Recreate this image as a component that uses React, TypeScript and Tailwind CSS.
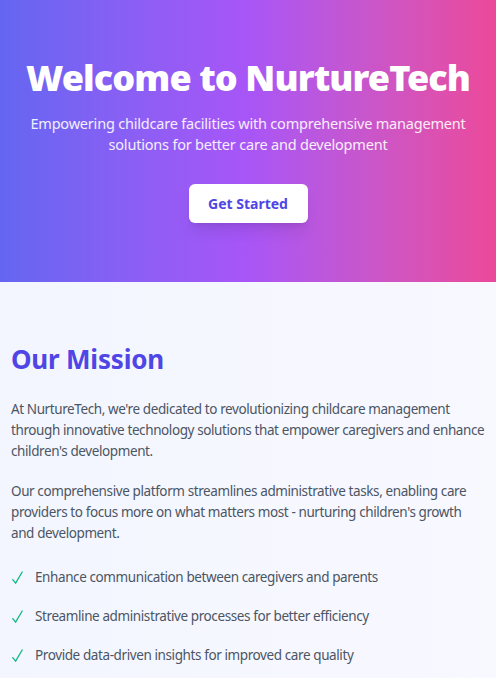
export default function App() {
  const points = [
    "Enhance communication between caregivers and parents",
    "Streamline administrative processes for better efficiency",
    "Provide data-driven insights for improved care quality",
  ];

  return (
    <main className="min-h-screen bg-gradient-to-r from-[#f3f6ff] to-[#f8f8ff] font-['Noto_Sans',sans-serif]">
      {/* Hero */}
      <section className="h-[282px] flex flex-col items-center pt-[52px] text-center text-white bg-gradient-to-r from-[#6366f1] via-[#a855f7] to-[#ec4899]">
        <h1 className="text-[36px] leading-[52px] font-black tracking-[-0.9px]">
          Welcome to NurtureTech
        </h1>
        <p className="mt-[9px] px-4 text-[14.5px] leading-[21px] tracking-[-0.2px] text-white/90">
          Empowering childcare facilities with comprehensive management solutions for better care and development
        </p>
        <button className="mt-[29px] w-[119px] h-[39px] rounded-md bg-white text-[14px] font-bold text-[#4f46e5] shadow-lg">
          Get Started
        </button>
      </section>

      {/* Mission */}
      <section className="px-[11px] pt-[60px] pb-8">
        <h2 className="text-[26px] leading-[34px] font-bold tracking-[-0.2px] text-[#4f46e5]">Our Mission</h2>
        <p className="mt-[23px] text-[13.5px] leading-[21px] tracking-[-0.4px] text-[#4b5563]">
          At NurtureTech, we're dedicated to revolutionizing childcare management through innovative technology solutions that empower caregivers and enhance children's development.
        </p>
        <p className="mt-[19px] text-[13.5px] leading-[21px] tracking-[-0.4px] text-[#4b5563]">
          Our comprehensive platform streamlines administrative tasks, enabling care providers to focus more on what matters most - nurturing children's growth and development.
        </p>
        <ul className="mt-[23px] flex flex-col gap-[18px]">
          {points.map((p) => (
            <li key={p} className="flex items-center text-[13.5px] leading-[21px] tracking-[-0.4px] text-[#4b5563]">
              <span className="w-[24px] pl-[1px]">
                <svg width="11" height="14" viewBox="0 0 11 14" fill="none" className="text-[#10b981]">
                  <path d="M0.8 8.6 L3.6 12.2 L10.2 1" stroke="currentColor" strokeWidth="1.3" strokeLinecap="round" strokeLinejoin="round" />
                </svg>
              </span>
              {p}
            </li>
          ))}
        </ul>
      </section>
    </main>
  );
}
